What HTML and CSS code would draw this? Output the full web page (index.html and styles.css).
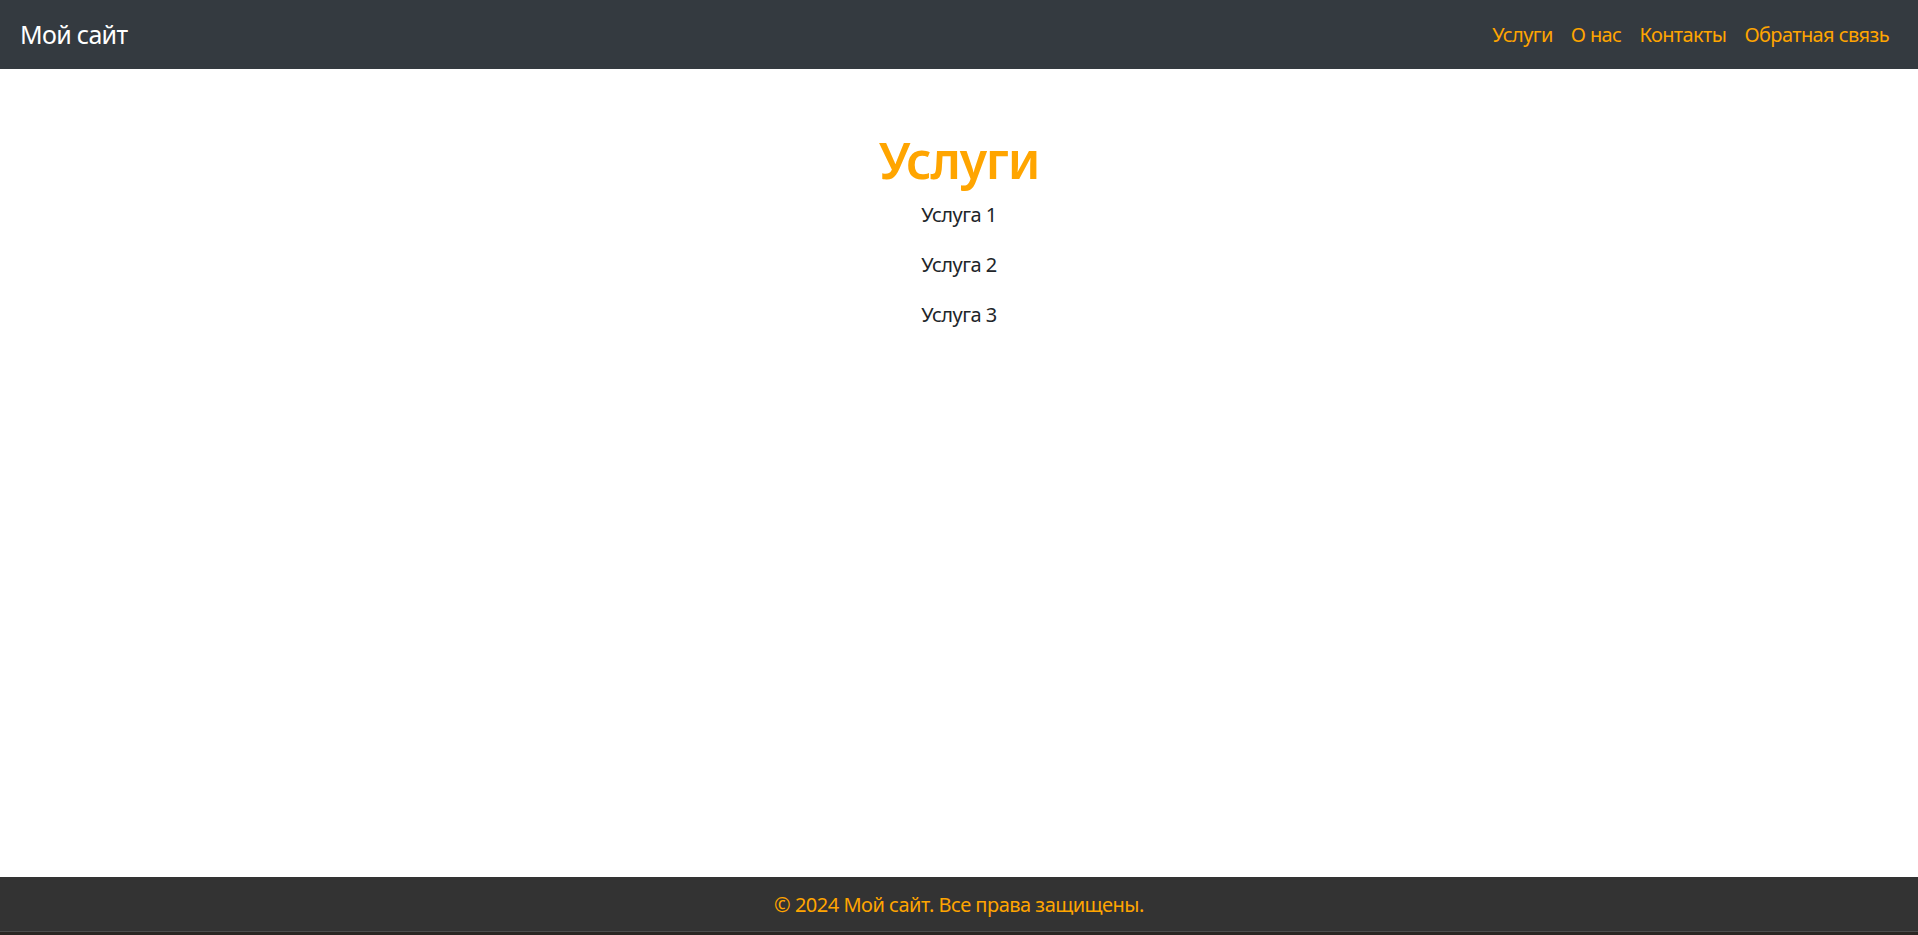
FILE: index.html
```html
<!DOCTYPE html>
<html lang="ru">
<head>
<meta charset="utf-8">
<title>Мой сайт</title>
<link rel="stylesheet" href="styles.css">
</head>
<body>
<header class="navbar">
  <a class="brand" href="#">Мой сайт</a>
  <nav class="nav">
    <a class="nav-link" href="#">Услуги</a>
    <a class="nav-link" href="#">О нас</a>
    <a class="nav-link" href="#">Контакты</a>
    <a class="nav-link" href="#">Обратная связь</a>
  </nav>
</header>
<main class="content">
  <h1 class="title">Услуги</h1>
  <p class="item">Услуга 1</p>
  <p class="item">Услуга 2</p>
  <p class="item">Услуга 3</p>
</main>
<footer class="footer">
  <p class="copy">© 2024 Мой сайт. Все права защищены.</p>
</footer>
<div class="edge"></div>
</body>
</html>
```
FILE: styles.css
```css
* { box-sizing: border-box; }
html, body { margin: 0; padding: 0; }
body {
  font-family: "Noto Sans", "Open Sans", sans-serif;
  font-size: 20px;
  line-height: 1.5;
  color: #212529;
  background: #fff;
  min-height: 100vh;
  display: flex;
  flex-direction: column;
}
.navbar {
  height: 69px;
  background: #343a40;
  display: flex;
  align-items: center;
  justify-content: space-between;
  padding: 0 20px 0 20px;
}
.brand {
  color: #fff;
  text-decoration: none;
  font-size: 25px;
  letter-spacing: -0.7px;
}
.nav { display: flex; }
.nav-link {
  color: #ffa500;
  text-decoration: none;
  padding: 0 9px;
  font-size: 20px;
  letter-spacing: -0.6px;
}
.content {
  flex: 1;
  text-align: center;
  padding-top: 61px;
}
.title {
  margin: 0 0 10px;
  font-size: 50px;
  line-height: 1.2;
  font-weight: 600;
  color: #ffa500;
  letter-spacing: -1.2px;
}
.item {
  margin: 0 0 20px;
  letter-spacing: -0.5px;
}
.footer {
  height: 54px;
  background: #333;
  display: flex;
  align-items: center;
  justify-content: center;
  padding-top: 2px;
}
.copy {
  margin: 0;
  color: #ffa500;
  letter-spacing: -0.5px;
}
.edge {
  height: 4px;
  background: #2a2623;
  border-top: 1px solid #4c4c4c;
}
```
